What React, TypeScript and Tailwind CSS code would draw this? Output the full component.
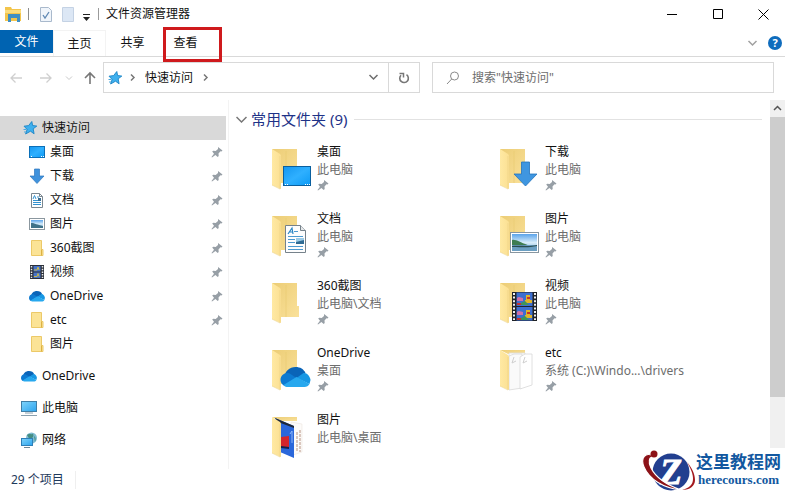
import type { ReactNode } from 'react';

type IconName =
  | 'star' | 'desktop' | 'download' | 'document' | 'picture'
  | 'folder' | 'video' | 'onedrive' | 'pc' | 'network' | 'etc' | 'photos';

type NavItem = { label: string; icon: IconName; pinned?: boolean };
type FolderItem = { name: string; path: string; icon: IconName; pinned: boolean };

const QUICK: NavItem[] = [
  { label: '桌面',     icon: 'desktop',  pinned: true },
  { label: '下载',     icon: 'download', pinned: true },
  { label: '文档',     icon: 'document', pinned: true },
  { label: '图片',     icon: 'picture',  pinned: true },
  { label: '360截图',  icon: 'folder',   pinned: true },
  { label: '视频',     icon: 'video',    pinned: true },
  { label: 'OneDrive', icon: 'onedrive', pinned: true },
  { label: 'etc',      icon: 'folder',   pinned: true },
  { label: '图片',     icon: 'folder' },
];

const ROOTS: NavItem[] = [
  { label: 'OneDrive', icon: 'onedrive' },
  { label: '此电脑',   icon: 'pc' },
  { label: '网络',     icon: 'network' },
];

const FOLDERS: FolderItem[] = [
  { name: '桌面',     path: '此电脑',       icon: 'desktop',  pinned: true },
  { name: '下载',     path: '此电脑',       icon: 'download', pinned: true },
  { name: '文档',     path: '此电脑',       icon: 'document', pinned: true },
  { name: '图片',     path: '此电脑',       icon: 'picture',  pinned: true },
  { name: '360截图',  path: '此电脑\\文档', icon: 'folder',   pinned: true },
  { name: '视频',     path: '此电脑',       icon: 'video',    pinned: true },
  { name: 'OneDrive', path: '桌面',         icon: 'onedrive', pinned: true },
  { name: 'etc',      path: '系统 (C:)\\Windo...\\drivers', icon: 'etc', pinned: true },
  { name: '图片',     path: '此电脑\\桌面', icon: 'photos',   pinned: false },
];

/** Gradients shared by all icons */
function Defs() {
  return (
    <svg className="absolute h-0 w-0" aria-hidden="true">
      <defs>
        <linearGradient id="flap" x1="0" y1="0" x2="1" y2="0">
          <stop offset="0" stopColor="#ffe9a3" />
          <stop offset="1" stopColor="#fbe093" />
        </linearGradient>
        <linearGradient id="back" x1="0" y1="0" x2="1" y2="1">
          <stop offset="0" stopColor="#eccd76" />
          <stop offset="1" stopColor="#fae19a" />
        </linearGradient>
        <linearGradient id="screen" x1="0" y1="0" x2="1" y2="1">
          <stop offset="0" stopColor="#1496f0" />
          <stop offset="0.5" stopColor="#2fb0ff" />
          <stop offset="1" stopColor="#0c9af5" />
        </linearGradient>
        <linearGradient id="monitor" x1="0" y1="0" x2="1" y2="1">
          <stop offset="0" stopColor="#7fd4fb" />
          <stop offset="1" stopColor="#2ba3ee" />
        </linearGradient>
        <linearGradient id="sky" x1="0" y1="0" x2="0" y2="1">
          <stop offset="0" stopColor="#5aa3ea" />
          <stop offset="0.5" stopColor="#d6ecfa" />
          <stop offset="1" stopColor="#7fb2d8" />
        </linearGradient>
      </defs>
    </svg>
  );
}

function Cloud() {
  return (
    <>
      <path d="M4 11C4 4 9 0 15 0c5 0 8 2 10 6l-9 6-8 2z" fill="#0a64b8" />
      <path d="M7 6C3 6 0 9 0 13c0 3 2 5 4 6l12-8-6-4c-1-1-2-1-3-1z" fill="#0d7ad1" />
      <path d="M16 11l7-5c4-1 7 5 7 7l-1 4z" fill="#1797e4" />
      <path d="M3 18l13-8 13 7c-1 2-3 3-5 3H6c-1 0-2-1-3-2z" fill="#27a8ee" />
    </>
  );
}

function SmallIcon({ name }: { name: IconName }) {
  const art: Partial<Record<IconName, ReactNode>> = {
    star: (
      <>
        <path d="M9.800 1.500l.8 4 4.200.6-3.600 2.700.9 5-3.600-2.600L3.600 14l1.500-4.600L2 6.200l4.600-.6z" fill="#3fb0ee" stroke="#1c84c6" strokeWidth="0.9" />
        <path d="M1.500 9.500h3M2 12h2" stroke="#4aa8dd" />
      </>
    ),
    desktop: (
      <>
        <rect x="0.5" y="2.500" width="15" height="11" fill="url(#screen)" stroke="#0b6fb8" />
        <path d="M2 12.500h2M12 12.500h3" stroke="#fff" strokeDasharray="1 1" />
      </>
    ),
    download: <path d="M5.500 1h5v7H15l-7 7.500L1 8h4.500z" fill="#3f92dc" stroke="#2c77bf" strokeWidth="0.7" />,
    document: (
      <>
        <path d="M2.500 1.500h8l3 3v11h-11z" fill="#fff" stroke="#7b8790" />
        <path d="M10.500 1.500v3h3" fill="none" stroke="#7b8790" />
        <path d="M4 7l1.500-3.500L7 7M8 5h2M4 8.500h8M4 10.500h8M4 12.500h8" fill="none" stroke="#3493d1" />
        <rect x="9" y="6" width="3" height="3" fill="#3d6f92" />
      </>
    ),
    picture: (
      <>
        <rect x="0.5" y="2.500" width="15" height="11" fill="#fff" stroke="#8b979f" />
        <rect x="2" y="4" width="12" height="8" fill="url(#sky)" />
        <path d="M2 7c4 0 6 2 12 3v2H2z" fill="#3f7289" />
      </>
    ),
    folder: (
      <>
        <path d="M2.500.5h10v9h1.500v6H2.500z" fill="#fbe396" stroke="#ecc968" />
        <path d="M12.500 9.500v6" stroke="#dcb144" />
      </>
    ),
    video: (
      <>
        <rect x="1" y="1" width="14" height="14" fill="#2b2f38" />
        <path d="M2.500 2v12M13.500 2v12" stroke="#e8eaec" strokeWidth="1.500" strokeDasharray="1.500 1.200" />
        <rect x="4.500" y="2" width="7" height="5.500" fill="#4673c9" />
        <rect x="4.500" y="8.500" width="7" height="5.500" fill="#4673c9" />
        <path d="M5 6h3l1-3 1 3M5 12.500h3l1-3 1 3" stroke="#c8b94c" fill="none" />
      </>
    ),
    onedrive: <g transform="translate(0 3) scale(.53)"><Cloud /></g>,
    pc: (
      <>
        <rect x="0.500" y="1.500" width="15" height="10" fill="url(#monitor)" stroke="#3f7ea6" />
        <path d="M4 13h8M0 15.500h16" stroke="#8ba0ae" />
      </>
    ),
    network: (
      <>
        <circle cx="10.500" cy="6" r="5.500" fill="#7ebcd2" />
        <path d="M6 3c2-2 4 0 5-1s2 1 1 3-3 1-3 3M13 4c2 1 2 4 1 6" fill="#458d83" />
        <rect x="0.500" y="6.500" width="11" height="7" fill="url(#monitor)" stroke="#2e7fb8" />
        <path d="M3 15.500h6" stroke="#6f8797" />
      </>
    ),
  };
  return <svg width="16" height="16" viewBox="0 0 16 16" className="shrink-0" aria-hidden="true">{art[name]}</svg>;
}

function FolderIcon({ name }: { name: IconName }) {
  const overlay: Partial<Record<IconName, ReactNode>> = {
    desktop: (
      <>
        <rect x="12.500" y="18.500" width="27" height="19" fill="url(#screen)" stroke="#0a5f9e" />
        <path d="M14 36.500h4M34 36.500h5" stroke="#fff" strokeDasharray="1 1" />
      </>
    ),
    download: <path d="M22.500 14h8v12h7.500L26.500 38 15 26h7.500z" fill="#3f96e0" stroke="#2574bd" strokeWidth="0.8" />,
    document: (
      <>
        <path d="M14.500 10.500h15l5 5v22h-20z" fill="#fdfdfd" stroke="#76828b" />
        <path d="M29.500 10.500v5h5" fill="#e5e8ea" stroke="#76828b" />
        <path d="M17 19l4-6 1 6M18 17h4" fill="none" stroke="#2a86c4" strokeWidth="1.200" />
        <path d="M23 16.500h4M17 21.500h15M17 24.500h7M17 27.500h7M17 31.500h15M17 34.500h15" stroke="#4d9ad0" />
        <rect x="25" y="23" width="8" height="6" fill="#2f6b93" />
        <path d="M25 23h8v2l-8 2z" fill="#9ccbe6" />
      </>
    ),
    picture: (
      <>
        <rect x="11.500" y="17.500" width="28" height="20" fill="#fff" stroke="#8896a0" />
        <rect x="13" y="19" width="25" height="17" fill="url(#sky)" />
        <path d="M13 25c5-1 9 4 20 6H13z" fill="#3e7d52" />
        <path d="M13 30h25v6H13z" fill="#6b9fc2" />
        <path d="M13 31c8-1 16 1 25-1v1c-9 2-14 1-25 1z" fill="#2a4d50" />
      </>
    ),
    video: (
      <>
        <rect x="13" y="10" width="25" height="29" fill="#202328" />
        <path d="M15 11v27M36 11v27" stroke="#f2f2f2" strokeWidth="2" strokeDasharray="2 1.600" />
        <rect x="17.500" y="10.500" width="16" height="13.500" fill="#3d6fd0" />
        <rect x="17.500" y="25" width="16" height="13.500" fill="#3d6fd0" />
        <path d="M18 16c2-2 4 0 6 0v3h-6zM18 30c2-2 4 0 6 0v3h-6z" fill="#d36fa5" />
        <path d="M27 13h4v5h2v3h-7v-3h1zM27 28h4v5h2v3h-7v-3h1z" fill="#dfb529" />
        <path d="M18 21h8l3 2H18zM18 36h8l3 2H18zM28 15h3v2h-3zM28 30h3v2h-3z" fill="#c8322d" />
        <path d="M22 21l4-2 4 4h-8zM22 36l4-2 4 4h-8z" fill="#3f9558" />
      </>
    ),
    onedrive: <g transform="translate(9.500 18)"><Cloud /></g>,
  };
  return (
    <svg width="44" height="44" viewBox="0 0 44 44" className="mt-[5px] shrink-0" aria-hidden="true">
      {name === 'etc' || name === 'photos' ? (
        <path d="M1 1h25v4H9z" fill="url(#back)" />
      ) : (
        <>
          <path d="M1 1h25v23h2v11H9z" fill="url(#back)" />
          <path d="M15 3v32" stroke="#e8c970" strokeWidth="0.6" />
        </>
      )}
      {name === 'etc' && (
        <>
          <path d="M10 4h16v34H10z" fill="#fcfcfc" stroke="#dcdcdc" strokeWidth="0.800" />
          <path d="M10 41V7l5-2h8v34z" fill="#fafafa" stroke="#d8d8d8" strokeWidth="0.800" />
          <path d="M21 40V8l5-3h7v31z" fill="#fff" stroke="#d8d8d8" strokeWidth="0.800" />
          <path d="M15 8l-2 6 4-2M26 8l-2 6 4-2" fill="none" stroke="#cfcfcf" />
        </>
      )}
      {name === 'photos' && (
        <>
          <path d="M20 6l11 2v28l-9 3z" fill="#fdfbf9" stroke="#ece6df" strokeWidth="0.600" />
          <path d="M26 16v20M29 14v22" stroke="#c4a596" strokeWidth="1.200" strokeDasharray="3 1" />
          <path d="M4 2l19 8v32L9 36z" fill="#2b67da" />
          <path d="M4 2l19 8v2L7 6z" fill="#202938" />
          <path d="M10 21l8-1v12l-8-1z" fill="#d4252b" />
          <path d="M10 30l8 1v2l-8-1z" fill="#14224e" />
          <path d="M19 18l2-3v12" stroke="#8fb8fa" fill="none" />
        </>
      )}
      <path d="M1 1l8 5q1 1 1 2v33L1 37z" fill="url(#flap)" />
      <path d="M1 37l8 4V8" fill="none" stroke="#ecd184" strokeWidth="0.600" />
      {overlay[name]}
    </svg>
  );
}

function Pin() {
  return (
    <svg width="12" height="12" viewBox="0 0 12 12" className="shrink-0" aria-label="已固定">
      <path d="M7 1l4.500 3.500-1 1-1-.2-2 2.200.2 2.500-1 1-2.300-2L1 11.500.5 11 3 7.700 1.200 5.500l1-.8 2.500.3L7 3z" fill="#979fa6" />
    </svg>
  );
}

function Chevron({ className, d = 'M1.500 3l4 4 4-4' }: { className: string; d?: string }) {
  return (
    <svg width="11" height="11" viewBox="0 0 11 11" className={className} aria-hidden="true">
      <path d={d} fill="none" stroke="currentColor" strokeWidth="1.500" />
    </svg>
  );
}

function TitleBar() {
  return (
    <header className="flex h-[30px] items-center pb-[2px]">
      <svg width="92" height="18" viewBox="0 0 92 18" className="ml-1 shrink-0" aria-hidden="true">
        <path d="M1 2h6l1 2h9v12H1z" fill="#f3c54c" />
        <path d="M1 5h16v3H1z" fill="#fbdd7f" />
        <path d="M4 9h12v8h-3v-4H7v4H4z" fill="#3f8fc4" />
        <path d="M24.500 3v12" stroke="#8d8d8d" />
        <path d="M36.500 2.500h8l3 3v11h-11z" fill="#f0f5fb" stroke="#a9b9cc" />
        <path d="M39 10l2 3 4-6" fill="none" stroke="#5f88b4" strokeWidth="1.300" />
        <path d="M58.500 2.500h11v14h-11z" fill="#dce7f5" stroke="#c4d2e4" />
        <path d="M79 9.500h7" stroke="#222" />
        <path d="M79 12h7l-3.500 4z" fill="#222" />
      </svg>
      <h1 className="ml-[2px] border-l border-[#9b9b9b] pl-[7px] leading-3">文件资源管理器</h1>
      <div className="ml-auto flex text-black">
        <button className="grid h-7 w-[46px] place-items-center" aria-label="最小化">
          <svg width="11" height="11" viewBox="0 0 11 11"><path d="M0 5.500h10" stroke="currentColor" /></svg>
        </button>
        <button className="grid h-7 w-[46px] place-items-center" aria-label="最大化">
          <svg width="11" height="11" viewBox="0 0 11 11"><path d="M.5.5h9v9h-9z" fill="none" stroke="currentColor" /></svg>
        </button>
        <button className="grid h-7 w-11 place-items-center" aria-label="关闭">
          <svg width="11" height="11" viewBox="0 0 11 11"><path d="M.5.5l10 10M10.500.5l-10 10" stroke="currentColor" /></svg>
        </button>
      </div>
    </header>
  );
}

function Ribbon() {
  return (
    <nav className="flex h-[27px] items-start border-b border-[#d9d9d9]">
      <button className="h-[23px] w-[53px] bg-[#0063b1] text-white">文件</button>
      <button className="h-[26px] w-[53px] border-x border-t border-[#f3f3f3]">主页</button>
      <button className="h-[26px] w-[53px]">共享</button>
      <button className="relative h-[26px] w-[53px]">
        查看
        {/* highlight frame */}
        <span className="absolute -top-[3px] left-1 h-[35px] w-[59px] border-3 border-[#cf1a1d]" />
      </button>
      <div className="ml-auto flex h-[26px] items-center gap-[10px] pr-[3px]">
        <button aria-label="展开功能区"><Chevron className="text-[#a0a0a0]" /></button>
        <button className="grid size-[14px] place-items-center rounded-full bg-[#0f6cbd] text-[11px] leading-[14px] font-bold text-white" aria-label="帮助">?</button>
      </div>
    </nav>
  );
}

function AddressBar() {
  return (
    <div className="flex items-center pt-[5px] pr-[11px] pb-[7px]">
      <div className="flex w-[103px] shrink-0 items-center pl-[9px]">
        <button aria-label="后退">
          <svg width="14" height="14" viewBox="0 0 14 14"><path d="M13 7H2M6.500 2.500L2 7l4.500 4.500" fill="none" stroke="#cfcfcf" strokeWidth="1.300" /></svg>
        </button>
        <button className="ml-4" aria-label="前进">
          <svg width="14" height="14" viewBox="0 0 14 14"><path d="M1 7h11M7.500 2.500L12 7l-4.500 4.500" fill="none" stroke="#cfcfcf" strokeWidth="1.300" /></svg>
        </button>
        <button className="ml-3" aria-label="最近位置">
          <svg width="8" height="8" viewBox="0 0 8 8"><path d="M1 2.500l3 3 3-3" fill="none" stroke="#c9c9c9" /></svg>
        </button>
        <button className="ml-[10px]" aria-label="向上">
          <svg width="14" height="14" viewBox="0 0 14 14"><path d="M7 13V2M2 7l5-5 5 5" fill="none" stroke="#777" strokeWidth="1.600" /></svg>
        </button>
      </div>
      <div className="flex h-[31px] min-w-0 flex-1 items-center border border-[#d9d9d9] pl-[3px]">
        <SmallIcon name="star" />
        <Chevron className="ml-1 text-[#777]" d="M4 2.500l3 3-3 3" />
        <a href="#quick" className="mx-[7px] leading-4">快速访问</a>
        <Chevron className="text-[#777]" d="M4 2.500l3 3-3 3" />
        <button className="ml-auto grid h-full w-[29px] place-items-center" aria-label="历史记录">
          <Chevron className="text-[#6d6d6d]" />
        </button>
        <button className="grid h-full w-[31px] place-items-center border-l border-[#d9d9d9]" aria-label="刷新">
          <svg width="12" height="12" viewBox="0 0 12 12">
            <path d="M8.500 2.700A4.300 4.300 0 1 1 3 3.200" fill="none" stroke="#777" strokeWidth="1.600" />
            <path d="M1.500 1.500h4v4" fill="none" stroke="#777" strokeWidth="1.500" />
          </svg>
        </button>
      </div>
      <label className="ml-3 flex h-[31px] w-[342px] shrink-0 items-center border border-[#d9d9d9] pl-[13px]">
        <svg width="14" height="14" viewBox="0 0 14 14" aria-hidden="true">
          <circle cx="8.500" cy="5" r="4" fill="none" stroke="#8a8a8a" />
          <path d="M5.700 8L1 13" stroke="#8a8a8a" />
        </svg>
        <input
          type="search"
          aria-label="搜索"
          placeholder={'搜索"快速访问"'}
          className="ml-3 min-w-0 flex-1 outline-none placeholder:text-[#6d6d6d]"
        />
      </label>
    </div>
  );
}

function Sidebar() {
  return (
    <nav className="w-[229px] shrink-0 border-r border-[#f3f3f3] pt-4">
      <a href="#quick" className="flex h-6 w-[226px] items-center gap-1 bg-[#d9d9d9] pl-[22px]">
        <SmallIcon name="star" />
        快速访问
      </a>
      <ul>
        {QUICK.map((item, i) => (
          <li key={i}>
            <a href="#folder" className="flex h-6 items-center gap-[5px] pr-[5px] pl-[29px]">
              <SmallIcon name={item.icon} />
              <span className="flex-1">{item.label}</span>
              {item.pinned && <Pin />}
            </a>
          </li>
        ))}
      </ul>
      <ul className="mt-2 flex flex-col gap-2">
        {ROOTS.map(item => (
          <li key={item.label}>
            <a href="#root" className="flex h-6 items-center gap-[5px] pl-[21px]">
              <SmallIcon name={item.icon} />
              {item.label}
            </a>
          </li>
        ))}
      </ul>
    </nav>
  );
}

function FolderList() {
  return (
    <section className="min-w-0 flex-1 pt-[7px] pr-2">
      <h2 className="flex h-6 items-center pl-[7px] text-[15px] text-[#1e3287]">
        <button className="flex items-center gap-1">
          <Chevron className="text-[#777]" d="M.5 3l5 5 5-5" />
          常用文件夹 (9)
        </button>
        <span className="ml-[7px] h-px flex-1 bg-[#e2e2e2]" />
      </h2>
      <ul className="mt-3 grid grid-cols-[repeat(auto-fill,228px)] gap-y-3 pl-[42px]">
        {FOLDERS.map((f, i) => (
          <li key={i} className="flex h-[55px] gap-[2px] whitespace-nowrap">
            <FolderIcon name={f.icon} />
            <div className="leading-[18px]">
              <p>{f.name}</p>
              <p className="text-[#6d6d6d]">{f.path}</p>
              {f.pinned && <Pin />}
            </div>
          </li>
        ))}
      </ul>
    </section>
  );
}

function ScrollBar() {
  return (
    <div className="flex w-[15px] shrink-0 flex-col bg-[#f0f0f0]">
      <button className="grid h-[17px] place-items-center" aria-label="向上滚动">
        <Chevron className="text-[#555]" d="M2 7l3.500-3.500L9 7" />
      </button>
      <div className="h-[76%] bg-[#cdcdcd]" />
    </div>
  );
}

function Watermark() {
  return (
    <div className="absolute right-0 bottom-0 flex items-center bg-white pr-1 text-[#1258a0]">
      <svg width="58" height="43" viewBox="0 0 58 43" aria-hidden="true">
        <circle cx="33" cy="24" r="18.500" fill="#223f8f" />
        <text x="33" y="36" textAnchor="middle" fontSize="36" fontStyle="italic" fontWeight="700" fontFamily="Liberation Serif, serif" fill="#fff" stroke="#fff">Z</text>
        {/* orbit around the globe */}
        <path d="M15 8C8 4 2 9 6 19c5 12 19 21 37 23-14-5-25-12-30-22-3-6-2-10 2-12z" fill="#8c1218" stroke="#fff" strokeWidth="1.200" />
        <circle cx="16" cy="6" r="3.500" fill="#8c1218" />
        <path d="M49 14c5 6 8 12 8 18 0 6-5 10-13 10 7-2 11-5 11-11 0-5-2-10-6-17z" fill="#a3181d" />
      </svg>
      <div className="text-center">
        <p className="text-[17px] leading-5 font-bold">这里教程网</p>
        <p className="font-['Liberation_Serif',serif] text-[13px] leading-4 font-bold">herecours.com</p>
      </div>
    </div>
  );
}

export default function App() {
  return (
    <div className="relative flex min-h-screen flex-col bg-white font-['Noto_Sans','Noto_Sans_CJK_SC',sans-serif] text-[12px] leading-[18px] text-[#111]">
      <Defs />
      <TitleBar />
      <Ribbon />
      <AddressBar />
      <main className="flex flex-1">
        <Sidebar />
        <FolderList />
        <ScrollBar />
      </main>
      <footer className="flex h-[22px] items-center pl-[11px] text-[#1e395b]">
        <span className="border-r border-[#efefef] pr-[11px]">29 个项目</span>
      </footer>
      <Watermark />
    </div>
  );
}
